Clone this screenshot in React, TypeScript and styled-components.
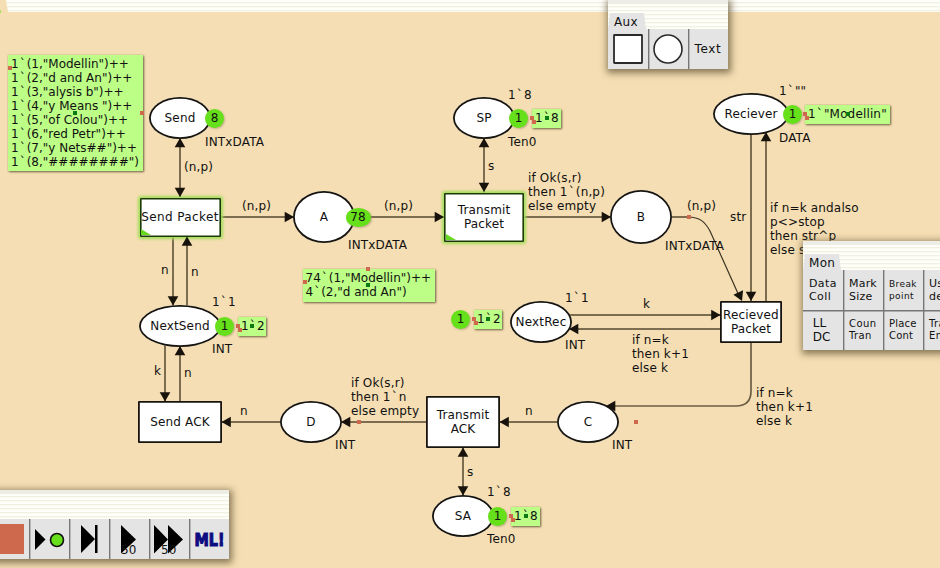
import React, { Fragment } from "react";
import styled, { createGlobalStyle, css } from "styled-components";

const Global = createGlobalStyle`
  body { margin: 0; background: #f5deb3; overflow: hidden; }
`;

const stripes = css`
  background: repeating-linear-gradient(to bottom, #fffffa 0 2px, #f1f0e3 2px 3px, #fbfaf1 3px 4px);
`;

const Workspace = styled.main`
  position: relative;
  width: 940px;
  height: 568px;
  overflow: hidden;
  background: #f5deb3;
  font: 12px/14px "DejaVu Sans", sans-serif;
  color: #111;
`;

const Binder = styled.header`
  height: 12px;
  margin-left: 6px;
  clip-path: polygon(0 0, 100% 0, 100% 100%, 2px 100%);
  ${stripes}
`;

const Corner = styled.i`
  position: absolute;
  left: -2px;
  top: 10px;
  width: 3px;
  height: 3px;
  border-radius: 50%;
  background: #8de23c;
`;

const Arcs = styled.svg`
  position: absolute;
  inset: 0;
`;

const Node = styled.div<{ $x: number; $y: number; $w: number; $h: number; $ls?: number }>`
  position: absolute;
  left: ${(p) => p.$x - p.$w / 2}px;
  top: ${(p) => p.$y - p.$h / 2}px;
  width: ${(p) => p.$w}px;
  height: ${(p) => p.$h}px;
  display: flex;
  align-items: center;
  justify-content: center;
  text-align: center;
  white-space: pre;
  letter-spacing: ${(p) => p.$ls ?? 0.15}px;
  background: #fff;
`;

const Place = styled(Node)`
  border-radius: 50%;
  box-shadow: inset 0 0 0 1.8px #17140f;
`;

const Transition = styled(Node)<{ $enabled?: boolean }>`
  border-radius: 1px;
  box-shadow: inset 0 0 0 1.8px #17140f;
  ${(p) =>
    p.$enabled &&
    css`
      box-shadow: inset 0 0 0 1.6px #1c3a08, 0 0 3px 2px #a4de5c;
      &::after {
        content: "";
        position: absolute;
        left: 1.5px;
        bottom: 1.5px;
        border-left: 10px solid #67d820;
        border-top: 6px solid transparent;
      }
    `}
`;

const Label = styled.div<{ $x: number; $y: number }>`
  position: absolute;
  left: ${(p) => p.$x}px;
  top: ${(p) => p.$y}px;
  white-space: pre;
  letter-spacing: 0.15px;
`;

const Line = styled.div`
  height: 14px;
`;

const Tick = styled.span`
  padding: 0 1px;
`;

/* A current marking: token count, then the multiset it stands for. */
const State = styled.div<{ $x: number; $y: number; $gap?: number }>`
  position: absolute;
  left: ${(p) => p.$x}px;
  top: ${(p) => p.$y}px;
  display: flex;
  align-items: center;
  gap: ${(p) => p.$gap ?? 4}px;
`;

const Token = styled.span<{ $w?: number }>`
  width: ${(p) => p.$w ?? 19}px;
  height: 19px;
  line-height: 19px;
  text-align: center;
  border-radius: 50%;
  background: #66e01a;
  box-shadow: 1px 1px 2px #9a8a6a90;
`;

const Marking = styled.div<{ $w: number; $h?: number; $ls?: number }>`
  position: relative;
  box-sizing: border-box;
  width: ${(p) => p.$w}px;
  height: ${(p) => p.$h ?? 19}px;
  padding: 2px 0 0 3px;
  white-space: pre;
  letter-spacing: ${(p) => p.$ls ?? 0}px;
  background: #bdfe86;
  box-shadow: 1px 1px 2px #6f6345, 0 0 1px #a9b070;
`;

const Handle = styled.i<{ $x: number; $y: number; $center?: boolean }>`
  position: absolute;
  left: ${(p) => p.$x - 2}px;
  top: ${(p) => p.$y - 2}px;
  width: 4px;
  height: 4px;
  background: ${(p) => (p.$center ? "#0b7a12" : "#cf694d")};
`;

const Palette = styled.section<{ $x: number; $y: number; $w: number }>`
  position: absolute;
  left: ${(p) => p.$x}px;
  top: ${(p) => p.$y}px;
  width: ${(p) => p.$w}px;
  box-shadow: 1px 2px 7px 2px #6b5c3ecc;
`;

const Strip = styled.div`
  display: flex;
  align-items: flex-end;
  box-sizing: border-box;
  height: 29px;
  ${stripes}
  border-top: 4px solid #eeede5;
`;

const Tab = styled.div`
  width: 39px;
  height: 16px;
  padding-left: 6px;
  box-sizing: border-box;
  line-height: 18px;
  letter-spacing: 0.3px;
  background: #e4e4e4;
  clip-path: polygon(0 100%, 2px 0, 36px 0, 38px 100%);
`;

const Tools = styled.div<{ $cols: number }>`
  display: grid;
  grid-template-columns: repeat(${(p) => p.$cols}, 40px);
  grid-auto-rows: 40px;
  background: #e4e4e4;
`;

const Tool = styled.div<{ $size?: number; $ls?: number; $line?: boolean; $top?: boolean; $center?: boolean }>`
  position: relative;
  box-sizing: border-box;
  display: flex;
  align-items: center;
  justify-content: ${(p) => (p.$center ? "center" : "flex-start")};
  padding-left: ${(p) => (p.$center ? 0 : 6)}px;
  white-space: pre;
  font-size: ${(p) => p.$size ?? 11}px;
  line-height: ${(p) => ((p.$size ?? 11) > 11 ? 14 : (p.$size ?? 11) > 10 ? 13 : 12)}px;
  letter-spacing: ${(p) => p.$ls ?? 0}px;
  box-shadow: ${(p) => (p.$line ? "inset 1.4px 0 #777" : "inset 0 0 #777")},
    ${(p) => (p.$top ? "inset 0 1.4px #777" : "inset 0 0 #777")};
`;

const Steps = styled.span`
  position: absolute;
  left: 12px;
  top: 25px;
  font-size: 12px;
`;

const Glyph = styled.svg`
  display: block;
  width: 40px;
  height: 40px;
`;

type XY = [number, number];

/* Multiset backquotes are set a little wider than the font gives them. */
const Ml = ({ children }: { children: string }) => (
  <>
    {children.split("\n").map((line, n) => (
      <Line key={n}>
        {line.split("`").map((part, i) => (
          <Fragment key={i}>
            {i > 0 && <Tick>`</Tick>}
            {part}
          </Fragment>
        ))}
      </Line>
    ))}
  </>
);

const lines: [XY, XY][] = [
  [[180, 138], [180, 197]],
  [[220, 217], [294, 217]],
  [[354, 217], [444, 217]],
  [[484, 138], [484, 193]],
  [[524, 217], [611, 217]],
  [[173, 236], [173, 306]],
  [[187, 236], [187, 308]],
  [[165, 343], [165, 401]],
  [[180, 346], [180, 401]],
  [[222, 422], [281, 422]],
  [[341, 422], [427, 422]],
  [[499, 422], [558, 422]],
  [[463, 447], [463, 496]],
  [[751, 133], [751, 301]],
  [[766, 133], [766, 301]],
  [[570, 315], [721, 315]],
  [[570, 329], [721, 329]],
];

const heads: [number, number, number][] = [
  [180, 138, -90], [180, 197, 90], [294, 217, 0], [444, 217, 0],
  [484, 138, -90], [484, 192, 90], [611, 217, 0],
  [173, 305.5, 90], [187, 236.5, -90], [165, 401.5, 90], [180, 346, -90],
  [221.5, 422, 180], [341, 422, 180], [499.5, 422, 180],
  [463, 447.5, -90], [463, 495.5, 90], [751, 301, 90], [766, 132, -90],
  [720.5, 315, 0], [569, 329, 180], [606, 406, 180], [742, 301, 66],
];

const places: [string, number, number, number, number][] = [
  ["Send", 180, 118, 62, 42],
  ["SP", 484, 118, 62, 42],
  ["A", 324, 217, 62, 52],
  ["B", 641, 217, 62, 54],
  ["NextSend", 180, 326, 82, 42],
  ["NextRec", 541, 322, 62, 42],
  ["D", 311, 422, 62, 42],
  ["C", 588, 422, 62, 42],
  ["SA", 463, 516, 62, 42],
  ["Reciever", 751, 114, 76, 42],
];

const labels: [number, number, string][] = [
  [205, 135, "INTxDATA"], [184, 160, "(n,p)"], [242, 199, "(n,p)"], [384, 199, "(n,p)"],
  [348, 238, "INTxDATA"], [508, 88, "1`8"], [508, 135, "Ten0"], [488, 159, "s"],
  [528, 171, "if Ok(s,r)\nthen 1`(n,p)\nelse empty"], [687, 199, "(n,p)"], [665, 239, "INTxDATA"],
  [779, 84, '1`""'], [779, 131, "DATA"], [730, 210, "str"],
  [770, 201, "if n=k andalso\np<>stop\nthen str^p\nelse str"],
  [161, 263, "n"], [191, 265, "n"], [212, 295, "1`1"], [212, 342, "INT"],
  [154, 364, "k"], [184, 366, "n"], [240, 404, "n"], [335, 438, "INT"],
  [351, 376, "if Ok(s,r)\nthen 1`n\nelse empty"], [565, 291, "1`1"], [565, 338, "INT"],
  [643, 297, "k"], [632, 333, "if n=k\nthen k+1\nelse k"], [525, 404, "n"], [612, 438, "INT"],
  [756, 386, "if n=k\nthen k+1\nelse k"], [467, 465, "s"], [487, 485, "1`8"], [487, 532, "Ten0"],
];

const states: { x: number; y: number; text: string; w: number; gap?: number }[] = [
  { x: 509, y: 108.5, text: "1`8", w: 29 },
  { x: 783, y: 104.5, text: '1`"Modellin"', w: 85, gap: 3 },
  { x: 215, y: 316.5, text: "1`2", w: 28 },
  { x: 451, y: 309.5, text: "1`2", w: 28 },
  { x: 488, y: 506.5, text: "1`8", w: 29 },
];

const buffer = [
  '1`(1,"Modellin")++', '1`(2,"d and An")++', '1`(3,"alysis b")++', '1`(4,"y Means ")++',
  '1`(5,"of Colou")++', '1`(6,"red Petr")++', '1`(7,"y Nets##")++', '1`(8,"########")',
].join("\n");

export default function App() {
  return (
    <Workspace>
      <Global />
      <Binder />
      <Corner />
      <Arcs width="940" height="568" fill="none" stroke="#7c6c50" strokeWidth="2">
        {lines.map(([a, b], i) => (
          <path key={i} d={`M${a[0]} ${a[1]}L${b[0]} ${b[1]}`} />
        ))}
        <path d="M671 217H688" />
        <path d="M688 217C700 217 705 222 710 231L740 298" stroke="#3c3425" strokeWidth="1.2" />
        <path d="M751 342V391Q751 406 736 406H606" strokeWidth="1.7" stroke="#6c5e45" />
      </Arcs>

      {places.map(([name, x, y, w, h]) => (
        <Place key={name} $x={x} $y={y} $w={w} $h={h}>{name}</Place>
      ))}

      <Transition $enabled $x={180} $y={217} $w={81} $h={39} $ls={0.4}>Send Packet</Transition>
      <Transition $enabled $x={484} $y={217} $w={80} $h={49}>{"Transmit\nPacket"}</Transition>
      <Transition $x={180} $y={422} $w={84} $h={42}>Send ACK</Transition>
      <Transition $x={463} $y={422} $w={74} $h={52}>{"Transmit\nACK"}</Transition>
      <Transition $x={751} $y={322} $w={62} $h={42}>{"Recieved\nPacket"}</Transition>

      <Arcs width="940" height="568" fill="#17120b">
        {heads.map(([x, y, deg]) => (
          <path key={`${x}-${y}`} d="M0 0L-9.300-5.300V5.300Z" transform={`translate(${x} ${y}) rotate(${deg})`} />
        ))}
      </Arcs>

      {labels.map(([x, y, text]) => (
        <Label key={`${x}-${y}`} $x={x} $y={y}><Ml>{text}</Ml></Label>
      ))}

      <State $x={205} $y={108.5}><Token>8</Token></State>
      <State $x={345.5} $y={207.5}><Token $w={25}>78</Token></State>
      {states.map(({ x, y, text, w, gap }) => (
        <State key={`${x}-${y}`} $x={x} $y={y} $gap={gap}>
          <Token>1</Token>
          <Marking $w={w} $ls={0.15}>
            <Ml>{text}</Ml>
            <Handle $x={0} $y={9} />
            <Handle $x={2} $y={13} />
            <Handle $center $x={w / 2} $y={9} />
          </Marking>
        </State>
      ))}

      <State $x={8} $y={55}>
        <Marking $w={135} $h={116}>
          <Ml>{buffer}</Ml>
          <Handle $x={2} $y={13} />
          <Handle $x={134} $y={58} />
          <Handle $center $x={67} $y={58} />
        </Marking>
      </State>
      <State $x={302.5} $y={269}>
        <Marking $w={132} $h={33}>
          <Ml>{'74`(1,"Modellin")++\n4`(2,"d and An")'}</Ml>
          <Handle $x={2} $y={13} />
          <Handle $x={65} $y={0} />
          <Handle $center $x={65} $y={16} />
        </Marking>
      </State>

      <Handle $x={359} $y={422} />
      <Handle $x={636} $y={422} />
      <Handle $x={689} $y={217} />

      <Palette $x={608} $y={0} $w={120}>
        <Strip><Tab>Aux</Tab></Strip>
        <Tools $cols={3}>
          <Tool $center><Glyph><rect x="6" y="6" width="28" height="28" rx="0.5" fill="#fff" stroke="#2a2a2a" strokeWidth="1.8" /></Glyph></Tool>
          <Tool $center $line><Glyph><circle cx="20" cy="20" r="14" fill="#fff" stroke="#2a2a2a" strokeWidth="1.6" /></Glyph></Tool>
          <Tool $center $line $size={12} $ls={0.7}>Text</Tool>
        </Tools>
      </Palette>

      <Palette $x={803} $y={241} $w={160}>
        <Strip><Tab>Mon</Tab></Strip>
        <Tools $cols={4}>
          <Tool $ls={0.4}>{"Data\nColl"}</Tool>
          <Tool $line $ls={0.2}>{"Mark\nSize"}</Tool>
          <Tool $line $size={9} $ls={0.4}>{"Break\npoint"}</Tool>
          <Tool $line $ls={0.3}>{"User\ndef"}</Tool>
          <Tool $top $size={12}>{" LL\n DC"}</Tool>
          <Tool $line $top $size={10} $ls={0.4}>{"Coun\nTran"}</Tool>
          <Tool $line $top $size={10} $ls={0.2}>{"Place\nCont"}</Tool>
          <Tool $line $top $size={10} $ls={0.4}>{"Trans\nEnab"}</Tool>
        </Tools>
      </Palette>

      <Palette $x={-11} $y={490} $w={240}>
        <Strip />
        <Tools $cols={6}>
          <Tool $center><Glyph><path d="M5 5h30v30H5z" fill="#cf694d" /></Glyph></Tool>
          <Tool $center $line><Glyph><path d="M6 10L16.500 20.500L6 31Z" /><circle cx="28" cy="21" r="6.500" fill="#66e01a" stroke="#111" strokeWidth="1.6" /></Glyph></Tool>
          <Tool $center $line><Glyph><path d="M12 6L26 20L12 34ZM26 6H28.500V34H26Z" /></Glyph></Tool>
          <Tool $center $line><Glyph><path d="M12 6L27 20.500L12 34.500Z" /></Glyph><Steps>50</Steps></Tool>
          <Tool $center $line><Glyph><path d="M5 6L19 20.500L5 34.500ZM19 6L34 20.500L19 34.500Z" /></Glyph><Steps>50</Steps></Tool>
          <Tool $center $line>
            <Glyph>
              <text x="5.500" y="26.500" fontSize="18" fontWeight="700" fill="#0c0c82" stroke="#0c0c82" strokeWidth="1.2" textLength="30" lengthAdjust="spacingAndGlyphs">ML!</text>
            </Glyph>
          </Tool>
        </Tools>
      </Palette>
    </Workspace>
  );
}
